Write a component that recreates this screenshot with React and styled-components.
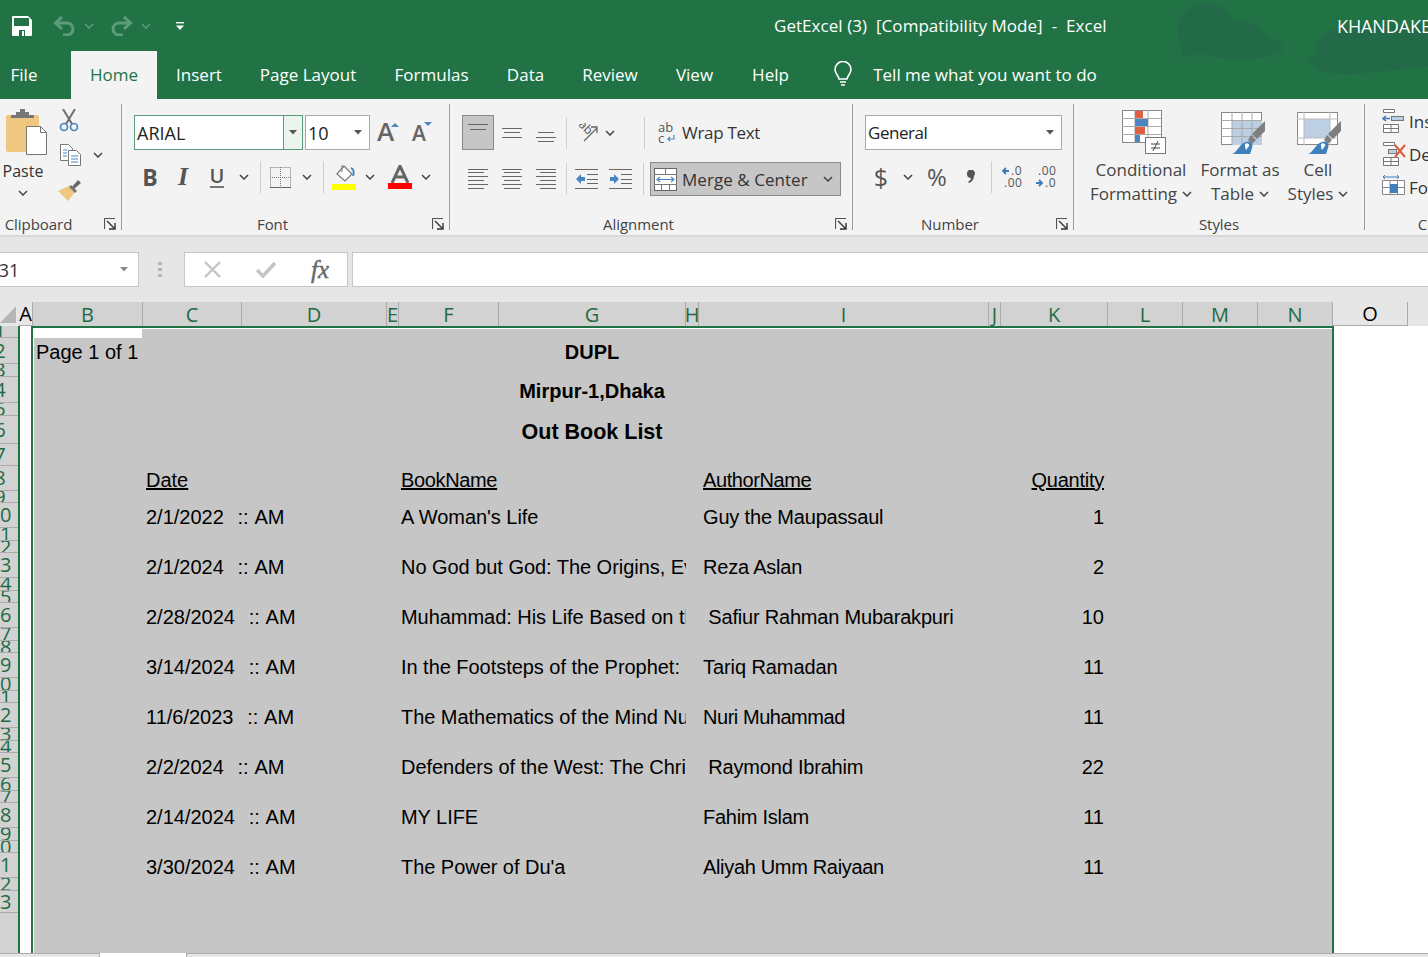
import React from "react";
import styled, { createGlobalStyle } from "styled-components";

const Global = createGlobalStyle`
  html, body { margin: 0; padding: 0; background: #fff; overflow: hidden; }
  * { box-sizing: border-box; }
`;
const UI = `"Open Sans", "Noto Sans", sans-serif`;
const GREEN = "#217346";

const Page = styled.div`
  width: 1428px; height: 957px; overflow: hidden; display: flex; flex-direction: column;
  font-family: ${UI}; color: #333; background: #e6e6e6;
`;
const Header = styled.header`
  position: relative; height: 99px; flex: none; background: ${GREEN}; color: #fff; overflow: hidden;
`;
const Decor = styled.svg`
  position: absolute; left: 1170px; top: 0; width: 258px; height: 99px;
`;
const TitleBar = styled.div`
  position: relative; height: 51px; display: flex; align-items: center; padding-left: 12px;
`;
const Qat = styled.div`
  display: flex; align-items: center; width: 762px; flex: none;
`;
const QatSlot = styled.span`
  display: inline-flex; align-items: center; justify-content: center; flex: none; width: ${p => p.$w}px; margin-left: ${p => p.$ml || 0}px;
`;
const Title = styled.div`
  font-size: 17px; letter-spacing: 0.05px; white-space: pre; width: 563px; flex: none;
`;
const User = styled.div`
  font-size: 18px; letter-spacing: -0.1px; white-space: nowrap;
`;
const TabRow = styled.nav`
  position: relative; height: 48px; display: flex; align-items: stretch;
`;
const Tab = styled.div`
  display: flex; align-items: center; justify-content: center; flex: none; font-size: 17px; white-space: nowrap; padding-bottom: 2px;
  width: ${p => p.$w}px; margin-left: ${p => p.$ml || 0}px;
  background: ${p => (p.$active ? "#f3f3f3" : "transparent")};
  color: ${p => (p.$active ? GREEN : "#fff")};
`;
const Ribbon = styled.section`
  height: 138px; flex: none; background: #f3f3f3; border-bottom: 2px solid #d8d8d8; display: flex; align-items: flex-start; overflow: hidden;
`;
const Group = styled.div`
  flex: none; width: ${p => p.$w}px; height: 126px; margin-top: 5px; border-right: ${p => (p.$last ? "0" : "1px solid #9c9c9c")};
  display: flex; flex-direction: column;
`;
const GroupBody = styled.div`
  height: 110px; flex: none; display: flex; flex-direction: column;
`;
const Row = styled.div`
  display: flex; align-items: ${p => (p.$top ? "flex-start" : "center")}; flex: none; height: ${p => p.$h}px; margin-top: ${p => p.$mt || 0}px; padding-left: ${p => p.$pl || 0}px;
`;
const GroupFooter = styled.div`
  position: relative; height: 16px; text-align: center; font-size: 15px; line-height: 20px; letter-spacing: -0.05px; color: #444; padding-right: ${p => p.$pr || 0}px; white-space: nowrap;
`;
const Launcher = styled.svg`
  position: absolute; right: 5px; top: 4px; width: 12px; height: 12px;
`;
const Slot = styled.span`
  display: inline-flex; align-items: center; justify-content: center; flex: none; width: ${p => p.$w}px; margin-left: ${p => p.$ml || 0}px;
`;
const VSep = styled.span`
  flex: none; width: 1px; height: ${p => p.$h || 32}px; background: #cfcfcf; margin-left: ${p => p.$ml || 0}px;
`;
const Combo = styled.div`
  flex: none; display: flex; align-items: center; height: 35px; width: ${p => p.$w}px; margin-left: ${p => p.$ml || 0}px; background: #fff;
  border: 1px solid ${p => (p.$focus ? "#5b9a78" : "#a9a9a9")}; font-size: ${p => p.$fs || 18}px; letter-spacing: ${p => p.$ls || 0}px; color: #222; padding-left: 2px;
`;
const ComboText = styled.span`
  flex: 1; white-space: nowrap;
`;
const ComboButton = styled.span`
  flex: none; align-self: stretch; width: ${p => p.$w}px; display: flex; align-items: center; justify-content: center;
  background: ${p => (p.$focus ? "#ecf4ef" : "transparent")}; border-left: ${p => (p.$focus ? "1px solid #5b9a78" : "0")};
`;
const Toggled = styled.div`
  flex: none; display: flex; align-items: center; background: #c6c6c6; border: 1px solid #8b8b8b;
  width: ${p => p.$w}px; height: ${p => p.$h}px; margin-left: ${p => p.$ml || 0}px;
  justify-content: ${p => (p.$center ? "center" : "flex-start")}; padding-left: ${p => (p.$center ? 0 : 3)}px;
`;
const ButtonText = styled.span`
  font-size: 17px; letter-spacing: ${p => p.$ls || 0}px; color: #333; margin-left: ${p => p.$ml || 0}px; white-space: nowrap;
`;
const PasteColumn = styled.div`
  width: 46px; flex: none; display: flex; flex-direction: column; align-items: center; padding-top: 5px;
`;
const PasteIconWrap = styled.div`
  padding-left: 7px; height: 46px; line-height: 0;
`;
const PasteLabel = styled.div`
  font-size: 16px; line-height: 22px; margin: 5px 0 8px; color: #333;
`;
const ClipColumn = styled.div`
  flex: none; display: flex; flex-direction: column; align-items: flex-start; margin-left: 11px; padding-top: 5px;
`;
const ClipRow = styled.div`
  display: flex; align-items: center; margin-top: ${p => p.$mt || 0}px; margin-left: ${p => p.$ml || 0}px;
`;
const Dollar = styled.span`
  font-size: 25px; color: #555; line-height: 1; width: 16px; text-align: center;
`;
const Percent = styled.span`
  font-size: 24px; color: #555; line-height: 1;
`;
const LargeButton = styled.div`
  flex: none; width: ${p => p.$w}px; margin-left: ${p => p.$ml || 0}px; display: flex; flex-direction: column; align-items: center;
`;
const LargeIcon = styled.div`
  height: 54px; display: flex; align-items: flex-end; padding-bottom: 4px; flex: none; padding-left: ${p => p.$pl || 0}px;
`;
const LargeLine = styled.div`
  font-size: 17px; line-height: 24px; color: #444; white-space: nowrap; display: flex; align-items: center; gap: 5px;
`;
const CellStack = styled.div`
  flex: none; display: flex; flex-direction: column;
`;
const CellCmd = styled.div`
  display: flex; align-items: center; height: 33px; font-size: 17px; color: #333; gap: 3px; white-space: nowrap;
`;
const CellLabel = styled.span`
  padding-top: 2px;
`;
const FormulaBar = styled.div`
  height: 65px; flex: none; padding-top: 15px; display: flex; align-items: flex-start; background: #e6e6e6;
`;
const NameBox = styled.div`
  width: 139px; height: 35px; flex: none; background: #fff; border: 1px solid #c6c6c6; border-left: 0; display: flex; align-items: center;
  font-size: 18px; color: #333; overflow: hidden;
`;
const NameText = styled.span`
  margin-left: -13px; flex: 1;
`;
const Dots = styled.span`
  flex: none; width: 4px; margin: 10px 0 0 19px; height: 15px;
  background: repeating-linear-gradient(to bottom, #b5b5b5 0 3px, transparent 3px 6px);
`;
const FxBox = styled.div`
  flex: none; width: 164px; height: 35px; margin-left: 22px; background: #fff; border: 1px solid #c6c6c6; display: flex; align-items: center;
`;
const FxSlot = styled.span`
  flex: none; width: 54px; display: flex; align-items: center; justify-content: center;
`;
const FxGlyph = styled.span`
  font-family: "Liberation Serif", serif; font-style: italic; font-size: 25px; color: #666; line-height: 1; -webkit-text-stroke: 0.4px #666;
`;
const FormulaInput = styled.div`
  flex: 1; height: 35px; margin-left: 4px; background: #fff; border: 1px solid #c6c6c6; border-right: 0;
`;
const ColumnHeads = styled.div`
  height: 24px; flex: none; display: flex; background: #e6e6e6;
`;
const Corner = styled.div`
  width: 19px; flex: none; display: flex; align-items: flex-start; padding-top: 4px;
`;
const ColHead = styled.div`
  flex: none; width: ${p => p.$w}px; overflow: hidden; display: flex; justify-content: center; align-items: center;
  font-size: 20px; line-height: 24px; height: 24px; padding-top: 1px;
  background: ${p => (p.$sel ? "#d2d2d2" : "#e6e6e6")};
  color: ${p => (p.$sel ? "#1e6b43" : "#000")};
  border-right: 1px solid #ababab;
  border-bottom: ${p => (p.$sel ? "0" : "1px solid #ababab")};
`;
const SheetArea = styled.div`
  flex: 1; display: flex; background: #fff; min-height: 0; position: relative;
`;
const RowHeads = styled.div`
  width: 18px; flex: none; background: #d2d2d2; overflow: hidden; display: flex; flex-direction: column;
`;
const RowHead = styled.div`
  flex: none; height: ${p => p.$h}px; overflow: hidden; border-bottom: 1px solid #ababab; display: flex; justify-content: flex-start; align-items: center;
  width: 18px; color: #1e6b43; font-size: 20px;
`;
const RowNum = styled.span`
  flex: none; display: block; width: 44px; margin-left: -22px; text-align: center; line-height: 1;
`;
const ColA = styled.div`
  width: 15px; flex: none; background: #fff; border-left: 2px solid ${GREEN}; border-right: 2px solid ${GREEN};
`;
const Selection = styled.div`
  width: 1301px; flex: none; background: #c6c6c6; border-top: 2px solid ${GREEN}; border-right: 2px solid ${GREEN}; display: flex; flex-direction: column;
  font-family: "Liberation Sans", Arial, sans-serif; font-size: 20px; color: #000; line-height: 25px; box-shadow: inset 1px 1px 0 #fff;
`;
const ActiveCell = styled.div`
  width: 109px; height: 10px; background: #fff; flex: none;
`;
const TopBlock = styled.div`
  height: 28px; flex: none; position: relative;
`;
const PageNo = styled.div`
  padding-left: 3px; line-height: 28px; white-space: nowrap;
`;
const TitleLine = styled.div`
  font-weight: 700; width: 1118px; text-align: center; line-height: 26px; flex: none; margin-top: ${p => p.$mt || 0}px; white-space: nowrap;
  font-size: ${p => p.$fs || 20}px;
`;
const TitleOver = styled(TitleLine)`
  position: absolute; left: 0; top: 0; line-height: 28px;
`;
const Table = styled.div`
  display: grid; flex: none; margin-left: 113px; margin-top: 23px;
  grid-template-columns: 255px 285px 17px 297px 104px;
  grid-auto-rows: auto;
`;
const HeadCell = styled.div`
  text-decoration: underline; white-space: nowrap; height: 25px; letter-spacing: ${p => p.$ls || 0}px;
  text-align: ${p => (p.$right ? "right" : "left")}; grid-column: ${p => p.$col};
`;
const Cell = styled.div`
  white-space: pre; overflow: hidden; height: 25px; grid-column: ${p => p.$col}; text-align: ${p => (p.$right ? "right" : "left")};
  letter-spacing: ${p => p.$ls || 0}px; word-spacing: ${p => p.$ws || 0}px;
`;
const RowGap = styled.div`
  grid-column: 1 / -1; height: ${p => p.$h}px;
`;
const BottomBar = styled.div`
  height: 4px; flex: none; background: #e6e6e6; border-top: 1px solid #ababab; display: flex;
`;
const SheetTab = styled.div`
  width: 88px; margin-left: 99px; margin-top: -1px; height: 5px; background: #fff; border: 1px solid #ababab; border-top: 0; border-bottom: 0;
`;
const BoldU = styled.span`
  font-size: ${p => p.$s || 23}px; font-weight: ${p => p.$fw || 700}; font-style: ${p => (p.$i ? "italic" : "normal")}; color: #555; line-height: 1;
  font-family: ${p => (p.$i ? '"Liberation Serif", serif' : UI)}; border-bottom: ${p => (p.$u ? "2px solid #777" : "0")};
`;

const Chev = ({ c = "#444", w = 10 }) => (
  <svg width={w} height="6" viewBox="0 0 10 6" style={{ flex: "none" }}>
    <path d="M1 1l4 4 4-4" fill="none" stroke={c} strokeWidth="1.5" />
  </svg>
);
const Caret = ({ c = "#555" }) => (
  <svg width="9" height="5" viewBox="0 0 9 5"><path d="M0 0h8L4 4.5z" fill={c} /></svg>
);
const LaunchIcon = () => (
  <Launcher viewBox="0 0 12 12">
    <path d="M.5 11V.5H11" fill="none" stroke="#555" strokeWidth="1.2" />
    <path d="M3 3l7 7M5 11h6V5" fill="none" stroke="#333" strokeWidth="1.4" />
  </Launcher>
);
const Lines = ({ ys, xs, w = 20, h = 20, c = "#666" }) => (
  <svg width={w} height={h} viewBox={`0 0 ${w} ${h}`}>
    {ys.map((y, i) => (
      <rect key={i} x={xs[i % xs.length][0]} y={y} width={xs[i % xs.length][1]} height="1" fill={c} />
    ))}
  </svg>
);
const SaveIcon = () => (
  <svg width="20" height="20" viewBox="0 0 20 20">
    <path d="M1 0h15l4 4v15a1 1 0 0 1-1 1H1a1 1 0 0 1-1-1V1a1 1 0 0 1 1-1z" fill="#fff" />
    <rect x="2" y="2" width="15" height="8" fill={GREEN} />
    <rect x="7" y="14" width="6" height="6" fill={GREEN} />
    <rect x="10" y="15" width="2" height="5" fill="#fff" />
  </svg>
);
const UndoIcon = ({ flip }) => (
  <svg width="22" height="20" viewBox="0 0 22 20" style={flip ? { transform: "scaleX(-1)" } : undefined}>
    <path d="M3 7h11a6 6 0 0 1 0 12h-4" fill="none" stroke="#5c9c7c" strokeWidth="3" />
    <path d="M9 1L2.500 7 9 13" fill="none" stroke="#5c9c7c" strokeWidth="3" />
  </svg>
);
const QatMore = () => (
  <svg width="8" height="8" viewBox="0 0 8 8"><rect y="0" width="8" height="1.4" fill="#fff" /><path d="M0 3.500h8L4 8z" fill="#fff" /></svg>
);
const Bulb = () => (
  <svg width="20" height="26" viewBox="0 0 20 26">
    <path d="M6 18c0-3-4-5-4-9.500a8 8 0 0 1 16 0C18 13 14 15 14 18z" fill="none" stroke="#fff" strokeWidth="1.6" />
    <path d="M7 21h6M8 24h4" stroke="#fff" strokeWidth="1.6" />
  </svg>
);
const PasteIcon = () => (
  <svg width="41" height="46" viewBox="0 0 41 46">
    <rect x="0" y="6" width="33" height="37" rx="2" fill="#efc77f" />
    <path d="M5 6h5V3h4V0h5v3h4v3h5v3H5z" fill="#777" />
    <path d="M20.500 17.500h14l6 6v22h-20z" fill="#fff" stroke="#777" />
    <path d="M34.500 17.500v6h6" fill="none" stroke="#777" />
  </svg>
);
const ScissorsIcon = () => (
  <svg width="20" height="23" viewBox="0 0 20 23">
    <path d="M4 0l9 15M16 0L7 15" stroke="#6e6e6e" strokeWidth="2" fill="none" />
    <circle cx="5" cy="18" r="3.500" fill="none" stroke="#4a86c0" strokeWidth="1.7" />
    <circle cx="15" cy="18" r="3.500" fill="none" stroke="#4a86c0" strokeWidth="1.7" />
  </svg>
);
const CopyIcon = () => (
  <svg width="21" height="22" viewBox="0 0 21 22">
    <path d="M.5.5h8l4 4v12H.5z" fill="#fff" stroke="#777" />
    <path d="M8.500 6.500h8l4 4v11h-12z" fill="#fff" stroke="#777" />
    <path d="M3 6h4M3 9h4M3 12h4M11 12h7M11 15h7M11 18h7" stroke="#4a86c0" />
  </svg>
);
const BrushIcon = () => (
  <svg width="24" height="21" viewBox="0 0 24 21">
    <path d="M16 9l7-6-3-3-6 7z" fill="#666" />
    <path d="M0 11l11-5 6 6-7 9z" fill="#efc77f" />
    <path d="M11 7l6 6 2-2-6-6z" fill="#777" />
  </svg>
);
const GrowIcon = ({ small }) => (
  <svg width="22" height="24" viewBox="0 0 22 24">
    <text x={small ? 1 : 0} y="20" fontFamily="Open Sans, sans-serif" fontSize={small ? 21 : 26} fontWeight="600" fill="#666">A</text>
    {small ? <path d="M13 1h8l-4 4z" fill="#4a86c0" /> : <path d="M14 6h8l-4-4z" fill="#4a86c0" />}
  </svg>
);
const BorderIcon = () => (
  <svg width="21" height="21" viewBox="0 0 21 21">
    <path d="M.5.5h20v20M.5.5v20M10.500 0v20M0 10.500h21" fill="none" stroke="#777" strokeDasharray="1 1" />
    <path d="M0 20.500h21" stroke="#666" />
  </svg>
);
const FillIcon = () => (
  <svg width="24" height="25" viewBox="0 0 24 25">
    <path d="M12 1l8 8-7 7-8-7z" fill="#fff" stroke="#777" strokeWidth="1.2" />
    <path d="M10 0v7" stroke="#777" />
    <path d="M19 3c3 1 3 5 2 8" fill="none" stroke="#4a86c0" strokeWidth="2" />
    <rect y="19" width="24" height="6" fill="#ffff00" />
  </svg>
);
const FontColorIcon = () => (
  <svg width="24" height="24" viewBox="0 0 24 24">
    <path d="M4 18L12 1l8 17M7 12h10" fill="none" stroke="#666" strokeWidth="3" />
    <rect y="18" width="24" height="6" fill="#ff0000" />
  </svg>
);
const OrientIcon = () => (
  <svg width="22" height="20" viewBox="0 0 22 20">
    <text x="0" y="12" transform="rotate(45 8 8) translate(-1 -3)" fontFamily="Open Sans, sans-serif" fontSize="12" fill="#555">ab</text>
    <path d="M7 18L20 5M14 4h6v6" fill="none" stroke="#666" strokeWidth="1.3" />
  </svg>
);
const IndentIcon = ({ inc }) => (
  <svg width="23" height="20" viewBox="0 0 23 20">
    <path d="M0 .5h23M0 19.500h23M12 5.500h11M12 10.500h11M12 14.500h11" stroke="#666" />
    {inc
      ? <path d="M1 8h4V5l5 5-5 5v-3H1z" fill="#4a86c0" />
      : <path d="M10 8H6V5l-5 5 5 5v-3h4z" fill="#4a86c0" />}
  </svg>
);
const WrapIcon = () => (
  <svg width="18" height="22" viewBox="0 0 18 22">
    <text x="0" y="10" fontFamily="Open Sans, sans-serif" fontSize="13" fill="#555">ab</text>
    <text x="0" y="21" fontFamily="Open Sans, sans-serif" fontSize="13" fill="#555">c</text>
    <path d="M16 13v4H10M12 15l-2 2 2 2" fill="none" stroke="#4a86c0" strokeWidth="1.200" />
  </svg>
);
const MergeIcon = () => (
  <svg width="23" height="23" viewBox="0 0 23 23">
    <rect x=".5" y=".5" width="22" height="22" fill="#fff" stroke="#666" />
    <path d="M0 6.500h23M0 16.500h23M11.500 0v6M7.500 17v6M15.500 17v6" stroke="#777" />
    <path d="M3 11.500h17M6 9l-3 2.500L6 14M17 9l3 2.500L17 14" fill="none" stroke="#4a86c0" strokeWidth="1.200" />
  </svg>
);
const CommaGlyph = () => (
  <svg width="9" height="14" viewBox="0 0 9 14"><path d="M1 4a4 4 0 1 1 7 2c0 3-2 6-5 7l-1-1c2-1 3-3 3-4a4 4 0 0 1-4-4z" fill="#555" /></svg>
);
const DecimalIcon = ({ dec }) => (
  <svg width="24" height="24" viewBox="0 0 24 24" fontFamily="Open Sans, sans-serif" fontSize="12" fill="#555">
    {dec ? (
      <>
        <text x="3" y="10" letterSpacing="0.5">.00</text>
        <path d="M1 18h5M4 15l3 3-3 3" fill="none" stroke="#3d7cb8" strokeWidth="1.800" />
        <text x="10" y="22" letterSpacing="0.5">.0</text>
      </>
    ) : (
      <>
        <path d="M8 6H2M5 3L2 6l3 3" fill="none" stroke="#3d7cb8" strokeWidth="1.800" />
        <text x="10" y="10" letterSpacing="0.5">.0</text>
        <text x="3" y="22" letterSpacing="0.5">.00</text>
      </>
    )}
  </svg>
);
const CondIcon = () => (
  <svg width="44" height="44" viewBox="0 0 44 44">
    <rect x=".5" y=".5" width="39" height="32" fill="#fff" stroke="#888" />
    <path d="M13 0v32M26 0v32M0 8.500h39M0 16.500h39M0 24.500h39" stroke="#ababab" />
    <rect x="13" y="1" width="8" height="7" fill="#dd6043" />
    <rect x="13" y="9" width="13" height="7" fill="#4a86c0" />
    <rect x="13" y="17" width="10" height="7" fill="#dd6043" />
    <rect x="13" y="25" width="5" height="7" fill="#4a86c0" />
    <rect x="23.500" y="27.500" width="20" height="16" fill="#fff" stroke="#777" />
    <path d="M29 34h9M29 38h9M36 31l-5 10" stroke="#444" fill="none" />
  </svg>
);
const TableStyleIcon = ({ cell }) => (
  <svg width="44" height="42" viewBox="0 0 44 42">
    <rect x=".5" y=".5" width="40" height="32" fill="#fff" stroke="#888" />
    {cell ? (
      <>
        <rect x="7" y="7" width="26" height="19" fill="#bccfe3" />
        <path d="M7 0v33M33 0v33M0 7h41M0 26h41" stroke="#bbb" />
      </>
    ) : (
      <>
        <rect x="11" y="8" width="30" height="25" fill="#bccfe3" />
        <path d="M11 0v33M21 0v33M31 0v33M0 8.500h41M0 16.500h41M0 24.500h41" stroke="#aaa" />
      </>
    )}
    <path d="M44 9v10l-8 8-5-5z" fill="#7f7f7f" />
    <path d="M30 23l5 5-4 4-4-4z" fill="#7f7f7f" />
    <path d="M11 42c5-1 8-11 14-12 4-2 8 2 6 6l-2 6z" fill="#3f7fbc" />
    <path d="M24 32c2-2 5 0 4 2l-3 4c-1-2-1-4-1-6z" fill="#fff" />
  </svg>
);
const CellIcon = ({ kind }) => (
  <svg width="24" height="24" viewBox="0 0 24 24">
    {kind === "ins" && (
      <>
        <path d="M1.500 .5h11v3h-11zM1.500 15.500h15v8h-15zM9 15v8M1 19.500h16" fill="#fff" stroke="#777" />
        <rect x="9.500" y="7.500" width="12" height="4" fill="#bccfe3" stroke="#777" />
        <path d="M8 9.500H1M4 7L1 9.500 4 12" fill="none" stroke="#3d7cb8" strokeWidth="1.500" />
      </>
    )}
    {kind === "del" && (
      <>
        <path d="M1.500 .5h11v3h-11zM1.500 15.500h15v8h-15zM9 15v8M1 19.500h16" fill="#fff" stroke="#777" />
        <rect x="6.500" y="7.500" width="8" height="4" fill="#bccfe3" stroke="#777" />
        <path d="M13 3l10 12M23 3L13 15" stroke="#dd5b3c" strokeWidth="2" />
      </>
    )}
    {kind === "fmt" && (
      <>
        <path d="M.5 5.500h22v14H.5zM8 5v14M15.500 5v14M0 12.500h23" fill="#fff" stroke="#888" />
        <rect x="8" y="9" width="8" height="9" fill="#3f7fbc" />
        <path d="M1 2h16M3 0L1 2l2 2M15 0l2 2-2 2" fill="none" stroke="#3d7cb8" />
      </>
    )}
  </svg>
);
const XIcon = () => (
  <svg width="17" height="17" viewBox="0 0 17 17"><path d="M1 1l15 15M16 1L1 16" stroke="#c4c4c4" strokeWidth="2.400" /></svg>
);
const CheckIcon = () => (
  <svg width="20" height="16" viewBox="0 0 20 16"><path d="M1 8l6 6L19 1" fill="none" stroke="#c4c4c4" strokeWidth="3.500" /></svg>
);

const COLS = [
  ["A", 14, false], ["B", 110, true], ["C", 99, true], ["D", 145, true], ["E", 12, true], ["F", 100, true],
  ["G", 187, true], ["H", 13, true], ["I", 290, true], ["J", 12, true], ["K", 107, true], ["L", 75, true],
  ["M", 75, true], ["N", 75, true], ["O", 75, false],
];
const ROW_HEIGHTS = [12, 26, 13, 26, 13, 28, 22, 25, 12, 25, 13, 12, 25, 13, 12, 25, 13, 12, 25, 13, 12, 25, 13, 12, 25, 13, 12, 25, 13, 12, 25, 13, 22];
const JUSTIFY_YS = [0, 3, 7, 11, 15, 19];
const DATA = [
  ["2/1/2022  :: AM", "A Woman's Life", "Guy the Maupassaul", "1", -0.17],
  ["2/1/2024  :: AM", "No God but God: The Origins, Evolution", "Reza Aslan", "2", -0.2],
  ["2/28/2024  :: AM", "Muhammad: His Life Based on the Earliest", " Safiur Rahman Mubarakpuri", "10", -0.2],
  ["3/14/2024  :: AM", "In the Footsteps of the Prophet: Lessons", "Tariq Ramadan", "11", -0.08],
  ["11/6/2023  :: AM", "The Mathematics of the Mind Nuri", "Nuri Muhammad", "11", -0.46],
  ["2/2/2024  :: AM", "Defenders of the West: The Christian", " Raymond Ibrahim", "22", -0.2],
  ["2/14/2024  :: AM", "MY LIFE", "Fahim Islam", "11", -0.27],
  ["3/30/2024  :: AM", "The Power of Du'a", "Aliyah Umm Raiyaan", "11", -0.33],
];

export default function App() {
  return (
    <Page>
      <Global />
      <Header>
        <Decor viewBox="0 0 258 99">
          <path d="M10 58C16 50 8 44 8 30 8 14 20 4 36 3c14-1 24 9 26 17 10-2 28 6 34 16 14 6 19 10 17 14-13 10-53 12-73 5-12-2-20 0-30 3z" fill="#236a49" />
          <path d="M136 59c14 0 10-3 10-11 2-14 19-22 39-22h73v40c-38 4-68 9-88 8-20-1-28-8-34-15z" fill="#236a49" />
        </Decor>
        <TitleBar>
          <Qat>
            <QatSlot $w={20}><SaveIcon /></QatSlot>
            <QatSlot $w={22} $ml={21}><UndoIcon /></QatSlot>
            <QatSlot $w={10} $ml={9}><Chev c="#5c9c7c" /></QatSlot>
            <QatSlot $w={22} $ml={17}><UndoIcon flip /></QatSlot>
            <QatSlot $w={10} $ml={8}><Chev c="#5c9c7c" /></QatSlot>
            <QatSlot $w={8} $ml={25}><QatMore /></QatSlot>
          </Qat>
          <Title>GetExcel (3)  [Compatibility Mode]  -  Excel</Title>
          <User>KHANDAKER</User>
        </TitleBar>
        <TabRow>
          <Tab $w={48}>File</Tab>
          <Tab $w={86} $ml={23} $active>Home</Tab>
          <Tab $w={44} $ml={20}>Insert</Tab>
          <Tab $w={96} $ml={39}>Page Layout</Tab>
          <Tab $w={73} $ml={39}>Formulas</Tab>
          <Tab $w={37} $ml={39}>Data</Tab>
          <Tab $w={54} $ml={39}>Review</Tab>
          <Tab $w={37} $ml={39}>View</Tab>
          <Tab $w={37} $ml={39}>Help</Tab>
          <Tab $w={20} $ml={44}><Bulb /></Tab>
          <Tab $w={226} $ml={19}>Tell me what you want to do</Tab>
        </TabRow>
      </Header>

      <Ribbon>
        <Group $w={122}>
          <GroupBody>
            <Row $h={104} $top>
              <PasteColumn>
                <PasteIconWrap><PasteIcon /></PasteIconWrap>
                <PasteLabel>Paste</PasteLabel>
                <Chev />
              </PasteColumn>
              <ClipColumn>
                <ClipRow $ml={2}><ScissorsIcon /></ClipRow>
                <ClipRow $mt={12} $ml={3}><CopyIcon /><Slot $w={10} $ml={12}><Chev /></Slot></ClipRow>
                <ClipRow $mt={14} $ml={1}><BrushIcon /></ClipRow>
              </ClipColumn>
            </Row>
          </GroupBody>
          <GroupFooter $pr={44}>Clipboard<LaunchIcon /></GroupFooter>
        </Group>

        <Group $w={328}>
          <GroupBody>
            <Row $h={35} $mt={11} $pl={12}>
              <Combo $w={169} $focus>
                <ComboText>ARIAL</ComboText>
                <ComboButton $w={19} $focus><Caret /></ComboButton>
              </Combo>
              <Combo $w={65} $ml={2}>
                <ComboText>10</ComboText>
                <ComboButton $w={22}><Caret /></ComboButton>
              </Combo>
              <Slot $w={22} $ml={7}><GrowIcon /></Slot>
              <Slot $w={22} $ml={12}><GrowIcon small /></Slot>
            </Row>
            <Row $h={32} $mt={11} $pl={12}>
              <Slot $w={32}><BoldU>B</BoldU></Slot>
              <Slot $w={24} $ml={5}><BoldU $i $s={26}>I</BoldU></Slot>
              <Slot $w={32} $ml={6}><BoldU $u $fw={600} $s={20}>U</BoldU></Slot>
              <Slot $w={10} $ml={6}><Chev /></Slot>
              <VSep $ml={11} />
              <Slot $w={21} $ml={9}><BorderIcon /></Slot>
              <Slot $w={10} $ml={11}><Chev /></Slot>
              <VSep $ml={11} />
              <Slot $w={24} $ml={8}><FillIcon /></Slot>
              <Slot $w={10} $ml={9}><Chev /></Slot>
              <Slot $w={24} $ml={13}><FontColorIcon /></Slot>
              <Slot $w={10} $ml={9}><Chev /></Slot>
            </Row>
          </GroupBody>
          <GroupFooter $pr={26}>Font<LaunchIcon /></GroupFooter>
        </Group>

        <Group $w={403}>
          <GroupBody>
            <Row $h={35} $mt={11} $pl={12}>
              <Toggled $w={32} $h={35} $center>
                <Lines w={20} h={20} ys={[1, 6]} xs={[[0, 20], [2, 16]]} c="#666" />
              </Toggled>
              <Slot $w={20} $ml={8}><Lines ys={[5, 9, 14]} xs={[[0, 20], [2, 16], [0, 20]]} /></Slot>
              <Slot $w={20} $ml={14}><Lines ys={[9, 14, 18]} xs={[[2, 16], [0, 20], [2, 16]]} /></Slot>
              <VSep $ml={10} />
              <Slot $w={22} $ml={10}><OrientIcon /></Slot>
              <Slot $w={10} $ml={6}><Chev /></Slot>
              <VSep $ml={29} />
              <Slot $w={18} $ml={13}><WrapIcon /></Slot>
              <ButtonText $ml={6} $ls={-0.3}>Wrap Text</ButtonText>
            </Row>
            <Row $h={34} $mt={12} $pl={18}>
              <Slot $w={20}><Lines ys={JUSTIFY_YS} xs={[[0, 20], [0, 16]]} /></Slot>
              <Slot $w={20} $ml={14}><Lines ys={JUSTIFY_YS} xs={[[0, 20], [2, 16]]} /></Slot>
              <Slot $w={20} $ml={14}><Lines ys={JUSTIFY_YS} xs={[[0, 20], [4, 16]]} /></Slot>
              <VSep $ml={10} />
              <Slot $w={23} $ml={8}><IndentIcon /></Slot>
              <Slot $w={23} $ml={11}><IndentIcon inc /></Slot>
              <VSep $ml={11} />
              <Toggled $w={191} $h={34} $ml={6}>
                <MergeIcon />
                <ButtonText $ml={5} $ls={0.05}>Merge &amp; Center</ButtonText>
                <Slot $w={10} $ml={15}><Chev /></Slot>
              </Toggled>
            </Row>
          </GroupBody>
          <GroupFooter $pr={25}>Alignment<LaunchIcon /></GroupFooter>
        </Group>

        <Group $w={221}>
          <GroupBody>
            <Row $h={35} $mt={11} $pl={12}>
              <Combo $w={197} $fs={17} $ls={-0.45}>
                <ComboText>General</ComboText>
                <ComboButton $w={22}><Caret /></ComboButton>
              </Combo>
            </Row>
            <Row $h={32} $mt={11} $pl={20}>
              <Dollar>$</Dollar>
              <Slot $w={10} $ml={14}><Chev /></Slot>
              <Slot $w={22} $ml={13}><Percent>%</Percent></Slot>
              <Slot $w={9} $ml={18}><CommaGlyph /></Slot>
              <VSep $ml={16} />
              <Slot $w={24} $ml={9}><DecimalIcon /></Slot>
              <Slot $w={24} $ml={10}><DecimalIcon dec /></Slot>
            </Row>
          </GroupBody>
          <GroupFooter $pr={26}>Number<LaunchIcon /></GroupFooter>
        </Group>

        <Group $w={291}>
          <GroupBody>
            <Row $h={104} $pl={14} $top>
              <LargeButton $w={106}>
                <LargeIcon $pl={6}><CondIcon /></LargeIcon>
                <LargeLine>Conditional</LargeLine>
                <LargeLine>Formatting <Chev /></LargeLine>
              </LargeButton>
              <LargeButton $w={80} $ml={6}>
                <LargeIcon $pl={6}><TableStyleIcon /></LargeIcon>
                <LargeLine>Format as</LargeLine>
                <LargeLine>Table <Chev /></LargeLine>
              </LargeButton>
              <LargeButton $w={60} $ml={8}>
                <LargeIcon $pl={2}><TableStyleIcon cell /></LargeIcon>
                <LargeLine>Cell</LargeLine>
                <LargeLine>Styles <Chev /></LargeLine>
              </LargeButton>
            </Row>
          </GroupBody>
          <GroupFooter>Styles</GroupFooter>
        </Group>

        <Group $w={138} $last>
          <GroupBody>
            <Row $h={104} $pl={17} $top>
              <CellStack>
                <CellCmd><CellIcon kind="ins" /><CellLabel>Insert</CellLabel></CellCmd>
                <CellCmd><CellIcon kind="del" /><CellLabel>Delete</CellLabel></CellCmd>
                <CellCmd><CellIcon kind="fmt" /><CellLabel>Format</CellLabel></CellCmd>
              </CellStack>
            </Row>
          </GroupBody>
          <GroupFooter>Cells</GroupFooter>
        </Group>
      </Ribbon>

      <FormulaBar>
        <NameBox>
          <NameText>B31</NameText>
          <Slot $w={28}><Caret c="#888" /></Slot>
        </NameBox>
        <Dots />
        <FxBox>
          <FxSlot><XIcon /></FxSlot>
          <FxSlot><CheckIcon /></FxSlot>
          <FxSlot><FxGlyph>fx</FxGlyph></FxSlot>
        </FxBox>
        <FormulaInput />
      </FormulaBar>

      <ColumnHeads>
        <Corner>
          <svg width="17" height="18" viewBox="0 0 17 18"><path d="M16 0v17H0z" fill="#b6b6b6" /></svg>
        </Corner>
        {COLS.map(([n, w, sel]) => (
          <ColHead key={n} $w={w} $sel={sel}>{n}</ColHead>
        ))}
      </ColumnHeads>

      <SheetArea>
        <RowHeads>
          {ROW_HEIGHTS.map((h, i) => (
            <RowHead key={i} $h={h}><RowNum>{i + 1}</RowNum></RowHead>
          ))}
        </RowHeads>
        <ColA />
        <Selection>
          <ActiveCell />
          <TopBlock>
            <PageNo>Page 1 of 1</PageNo>
            <TitleOver>DUPL</TitleOver>
          </TopBlock>
          <TitleLine $mt={12}>Mirpur-1,Dhaka</TitleLine>
          <TitleLine $mt={15} $fs={21.5}>Out Book List</TitleLine>
          <Table>
            <HeadCell $col={1}>Date</HeadCell>
            <HeadCell $col={2} $ls={-0.35}>BookName</HeadCell>
            <HeadCell $col={4} $ls={-0.4}>AuthorName</HeadCell>
            <HeadCell $col={5} $right $ls={-0.25}>Quantity</HeadCell>
            <RowGap $h={12} />
            {DATA.map(([d, b, a, q, ls], i) => (
              <React.Fragment key={i}>
                <Cell $col={1} $ws={1.3}>{d}</Cell>
                <Cell $col={2} $ls={-0.04}>{b}</Cell>
                <Cell $col={4} $ls={ls}>{a}</Cell>
                <Cell $col={5} $right>{q}</Cell>
                <RowGap $h={25} />
              </React.Fragment>
            ))}
          </Table>
        </Selection>
      </SheetArea>
      <BottomBar><SheetTab /></BottomBar>
    </Page>
  );
}
